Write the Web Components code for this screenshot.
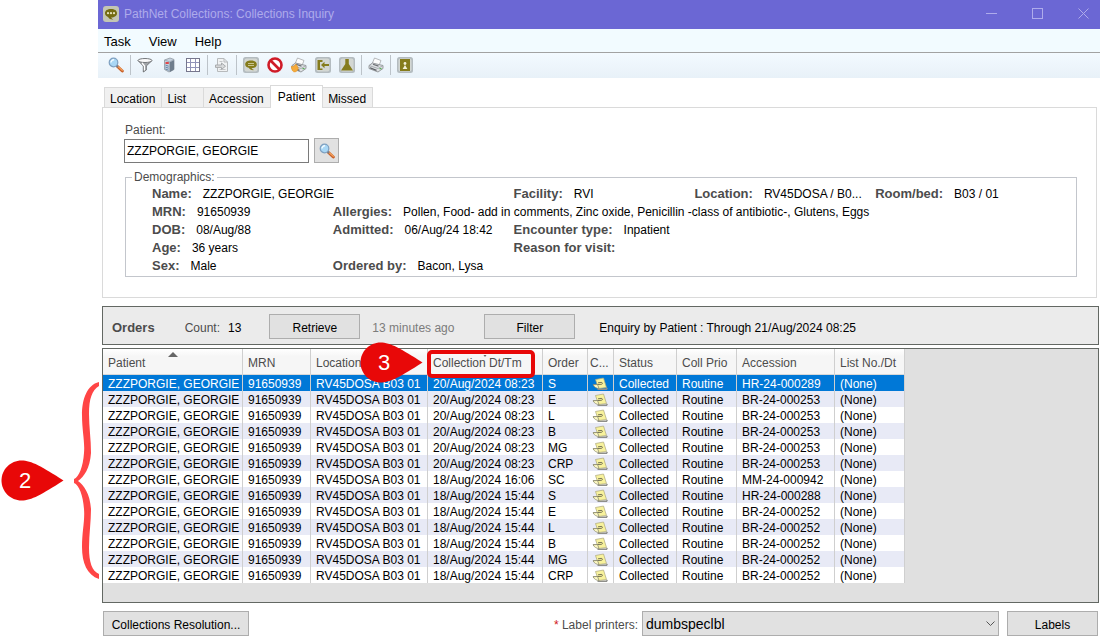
<!DOCTYPE html>
<html lang="en">
<head>
<meta charset="utf-8">
<title>PathNet Collections: Collections Inquiry</title>
<style>
  html, body { margin: 0; background: #fff; }
  body { font: 12px/16px "Liberation Sans", Arial, sans-serif; color: #000; }
</style>
</head>
<body>
<app-window>
  <title-bar slot="bar">PathNet Collections: Collections Inquiry</title-bar>
  <menu-bar slot="bar"></menu-bar>
  <tool-bar slot="bar"></tool-bar>
  <tab-strip></tab-strip>
  <patient-panel>
    <data-field label="Name">ZZZPORGIE, GEORGIE</data-field>
    <data-field label="Facility" col="3">RVI</data-field>
    <data-field label="Location" col="4">RV45DOSA / B0...</data-field>
    <data-field label="Room/bed" col="5">B03 / 01</data-field>
    <data-field label="MRN">91650939</data-field>
    <data-field label="Allergies" col="2" span="4">Pollen, Food- add in comments, Zinc oxide, Penicillin -class of antibiotic-, Glutens, Eggs</data-field>
    <data-field label="DOB">08/Aug/88</data-field>
    <data-field label="Admitted" col="2">06/Aug/24 18:42</data-field>
    <data-field label="Encounter type" col="3">Inpatient</data-field>
    <data-field label="Age">36 years</data-field>
    <data-field label="Reason for visit" col="3"></data-field>
    <data-field label="Sex">Male</data-field>
    <data-field label="Ordered by" col="2">Bacon, Lysa</data-field>
  </patient-panel>
  <orders-bar></orders-bar>
  <orders-grid>
    <step-brace slot="notes"></step-brace>
    <step-pin slot="notes" style="left:-102px; top:111px">2</step-pin>
    <step-box slot="notes"></step-box>
    <step-pin slot="notes" style="left:257px; top:-7px">3</step-pin>
  </orders-grid>
  <footer-bar></footer-bar>
</app-window>

<script>
const define = (name, html, setup) => customElements.define(name, class extends HTMLElement {
  constructor() {
    super();
    this.attachShadow({ mode: 'open' }).innerHTML = html;
  }
  connectedCallback() { if (setup) setup(this, this.shadowRoot); }
});

const svg = (body, w = 16, h = 16) => `<svg width="${w}" height="${h}" viewBox="0 0 ${w} ${h}" aria-hidden="true">${body}</svg>`;
const tile = body => svg(`<rect x="0" y="0" width="16" height="16" rx="2.500" fill="#b4bcc0"/><rect x="1.500" y="1.500" width="13" height="13" rx="2" fill="#d3d7d3"/>${body}`);
const printer = `<path d="M4 7 6.500 1l6.500 2.500-2 5z" fill="#fdfdfd" stroke="#a5a7aa" stroke-width=".8"/><path d="M1 8.500 4.500 6l10.500 2.500v3l-5 3.500-9-3.500z" fill="#dde0e3" stroke="#85888c" stroke-width=".8"/><path d="M1 8.500l9 3 5-3" fill="none" stroke="#9b9fa4" stroke-width=".8"/><path d="M2 10.800l6.500 2.600" stroke="#5b5f63" stroke-width="1.200"/><path d="M5 7.200l5.500 1.900" stroke="#6b6e72" stroke-width="1.200"/><rect x="11.500" y="11" width="2" height="1.200" fill="#55b255"/>`;
const icons = {
  search: svg(`<path d="M9.500 9.500 14.300 14" stroke="#c9622b" stroke-width="3" stroke-linecap="round"/><path d="M9.800 9.300 14.300 13.300" stroke="#f3a05c" stroke-width="1.200" stroke-linecap="round"/><path d="M8.500 8.500l1.500 1.500" stroke="#777f8a" stroke-width="2"/><circle cx="5.500" cy="5.500" r="4.300" fill="#a9d7f5" stroke="#7fa0c0" stroke-width="1.200"/><path d="M3 5.500A2.800 2.800 0 0 1 6 2.800" fill="none" stroke="#f2fbff" stroke-width="1.500"/>`),
  filter: svg(`<path d="M1 3.500 6.300 9v6l3-2V9L15 3.500z" fill="#a2a5a8" stroke="#5f6265" stroke-width=".8"/><ellipse cx="8" cy="3.500" rx="7" ry="2" fill="#fafafa" stroke="#76797c"/><path d="M5 6 7.500 9v4.500" fill="none" stroke="#fff" stroke-width="1.300"/>`),
  server: svg(`<path d="M3.500 3 9 1l4 1.500v10l-5 2.500-4.500-2.500z" fill="#c6d2df" stroke="#8f989f" stroke-width=".8"/><path d="M9 5l4-2v9.500L9 15z" fill="#6f7d8c"/><path d="M3.500 3 8.500 4.800 13 2.700M8.500 5v10" fill="none" stroke="#9aa5b0" stroke-width=".8"/><path d="M4.300 8l3.400 1.200M4.300 10l3.400 1.200M4.300 12l3.400 1.200" stroke="#6987a8"/><rect x="4.500" y="5" width="3.300" height="2" fill="#e0474a"/>`),
  grid: svg(`<rect x="1.500" y="1.500" width="13" height="13" fill="#fff" stroke="#76768c"/><path d="M2 5.500h12M2 10.500h12M5.500 2v12M10.500 2v12" stroke="#9193b8"/>`),
  page: svg(`<path d="M3.500 1.500h6.500l3.500 3.500v9.500h-10z" fill="#f0f2f3" stroke="#b7babc"/><path d="M10 1.500V5h3.500" fill="none" stroke="#b7babc"/><path d="M5.500 4.500h3M5.500 12.500h6" stroke="#c4c6c8"/><path d="M1.500 8h6V6l4 3.200-4 3.200v-2h-6z" fill="#d9dbdc" stroke="#a8abad"/>`),
  chat: tile(`<path d="M8 3.500c3.400 0 5.800 1.500 5.800 3.900 0 2.300-2.100 3.800-5.300 3.900.7.900 1.500 1.400 2.500 1.800-2.600.2-4.200-.6-5.300-2.300C3.300 10.200 2.200 9 2.200 7.400 2.200 5 4.600 3.500 8 3.500z" fill="#857c1c"/><path d="M5 6.500h6M5 8.500h6" stroke="#d9d6ae" stroke-width=".8"/>`),
  stop: svg(`<circle cx="8" cy="8" r="6.500" fill="#fff" stroke="#cf1c28" stroke-width="2.600"/><path d="M3.500 3.500l9 9" stroke="#cf1c28" stroke-width="2.600"/>`),
  hotprint: svg(printer + `<path d="M0 9.500c2 .5 3.500-.5 5-2.500.3 1.700 2.500 2.700 2.200 4.800-.6 2.400-2.700 3.400-4.500 3C.5 13.500 1 11.500 0 9.500z" fill="#f5ab3c" stroke="#e0911f" stroke-width=".6"/>`),
  exit: tile(`<path d="M2.500 3h5v2H5v6.500h2.500V13h-5z" fill="#857c1c"/><path d="M6 8 9.500 4.800v2.200H14v2H9.500v2.200z" fill="#857c1c"/>`),
  flask: tile(`<path d="M6.300 2h3.500v5l4.200 6.500H2L6.300 7z" fill="#857c1c"/>`),
  print: svg(printer),
  badge: tile(`<rect x="3" y="2" width="10" height="12" fill="#857c1c"/><circle cx="8" cy="6.500" r="1.400" fill="#f2f0d8"/><path d="M8 8l2.400 4H5.600z" fill="#f2f0d8"/>`),
  app: svg(`<rect x="0" y="0" width="16" height="16" rx="3" fill="#c3c6b4"/><path d="M8 3c3.600 0 6 1.600 6 4.200s-2.400 4.200-6 4.200c.6 1 1.400 1.600 2.400 2-2.600.2-4.400-.7-5.400-2.500C3.300 10.200 2 9 2 7.200 2 4.600 4.400 3 8 3z" fill="#746c12"/><circle cx="5" cy="7.200" r="1.100" fill="#e8e5c0"/><circle cx="8" cy="7.200" r="1.100" fill="#e8e5c0"/><circle cx="11" cy="7.200" r="1.100" fill="#e8e5c0"/>`),
  note: svg(`<path d="M5.500 12.300h9l.8-1.500" fill="none" stroke="#8f8f8a" stroke-width="1.400"/><path d="M3.500 2.500 11.500 1 14.500 10.500 6.500 11.500z" fill="#f8f29c" stroke="#aaa67c" stroke-width=".7"/><path d="M1 7.800 9.500 7.300c1.300-.2 1.200-2-.3-1.900L6 5.800" fill="none" stroke="#6a6850" stroke-width=".9"/><path d="M1 7.800l4.500-.3 1.500 4c-2.300 0-4.600-1.200-6-3.700z" fill="#fdf9c4" stroke="#88866a" stroke-width=".7"/>`, 16, 14),
};

define('app-window', `
<style>
  :host { display: flex; flex-direction: column; min-height: 100vh; margin-left: 98px; box-sizing: border-box; background: #fff; }
  main { flex: 1; display: flex; flex-direction: column; padding: 8px 1px 4px 4px; }
</style>
<slot name="bar"></slot>
<main><slot></slot></main>`);

define('title-bar', `
<style>
  :host { display: flex; align-items: center; gap: 5px; height: 29px; padding: 0 5px 2px; background: #6b67d4; color: #aeabeb; box-sizing: border-box; }
  h1 { flex: 1; margin: 0; font: 12px/16px "Liberation Sans", sans-serif; }
  button { width: 24px; height: 24px; padding: 0; border: 0; background: none; color: inherit; display: grid; place-items: center; }
  nav { display: flex; gap: 22px; }
  svg { display: block; }
</style>
${icons.app}
<h1><slot></slot></h1>
<nav>
  <button aria-label="Minimise">${svg('<path d="M0 5.500h11" stroke="currentColor"/>', 11, 11)}</button>
  <button aria-label="Maximise">${svg('<rect x=".5" y=".5" width="10" height="10" fill="none" stroke="currentColor"/>', 11, 11)}</button>
  <button aria-label="Close">${svg('<path d="M.5.500l10 10M10.500.500l-10 10" stroke="currentColor"/>', 11, 11)}</button>
</nav>`);

define('menu-bar', `
<style>
  :host { display: flex; align-items: center; gap: 18px; height: 24px; padding: 3px 6px 0; border-bottom: 1px solid #a2a2a2; background: #f2fbff; box-sizing: border-box; }
  button { border: 0; padding: 0; background: none; font: inherit; font-size: 13px; color: #000; }
</style>
<button>Task</button><button>View</button><button>Help</button>`);

define('tool-bar', `
<style>
  :host { display: flex; align-items: center; height: 25px; padding: 0 6px 1px; background: linear-gradient(#f3faff, #e8f1f8); box-sizing: border-box; }
  button { width: 24px; height: 24px; border: 0; padding: 0; background: none; display: grid; place-items: center; }
  i { width: 1px; height: 20px; margin: 0 2px; background: #bcc3c9; }
  svg { display: block; }
</style>
${[['search'], ['filter', 'server', 'grid'], ['page'], ['chat', 'stop', 'hotprint', 'exit', 'flask'], ['print'], ['badge']]
  .map(group => group.map(n => `<button aria-label="${n}">${icons[n]}</button>`).join('')).join('<i></i>')}`);

define('tab-strip', `
<style>
  :host { display: flex; align-items: flex-end; padding-left: 2px; height: 22px; position: relative; z-index: 1; margin-bottom: -1px; }
  button { height: 20px; margin: 0 0 1px -1px; padding: 2px 6px 0 5px; border: 1px solid #dadada; border-bottom: 0; background: #f0f0f0; font: inherit; color: #000; text-align: left; box-sizing: border-box; }
  button:first-child { margin-left: 0; }
  .wide { padding-right: 17px; }
  button[aria-selected=true] { height: 23px; margin-bottom: 0; padding: 0 7px; background: #fff; }
  div { display: flex; align-items: flex-end; }
</style>
<div role="tablist">
  <button role="tab">Location</button><button role="tab" class="wide">List</button><button role="tab">Accession</button><button role="tab" aria-selected="true">Patient</button><button role="tab">Missed</button>
</div>`);

define('patient-panel', `
<style>
  :host { display: block; margin-right: 2px; padding: 14px 19px 20px 21px; border: 1px solid #dadada; box-sizing: border-box; }
  label { display: block; color: #4c4c4c; padding-left: 1px; }
  .row { display: flex; align-items: flex-end; gap: 5px; margin-bottom: 6px; }
  input { width: 185px; height: 24px; box-sizing: border-box; border: 1px solid #7a7a7a; padding: 0 2px; font: inherit; color: #000; background: #fff; }
  button { width: 25px; height: 25px; padding: 0; display: grid; place-items: center; border: 1px solid #adadad; background: #e1e1e1; }
  fieldset { margin: 0 0 0 1px; min-width: 0; border: 1px solid #c3c6cc; padding: 0 20px 1px 26px; }
  legend { margin-left: -20px; padding: 0 2px; color: #4c4c4c; }
  .fields { display: grid; grid-template-columns: repeat(5, minmax(0, 1fr)); grid-auto-rows: 18px; }
</style>
<label for="patient">Patient:</label>
<div class="row">
  <input id="patient" value="ZZZPORGIE, GEORGIE">
  <button aria-label="Find patient">${icons.search}</button>
</div>
<fieldset>
  <legend>Demographics:</legend>
  <div class="fields"><slot></slot></div>
</fieldset>`);

define('data-field', `
<style>
  :host { display: flex; align-items: center; gap: 11px; white-space: nowrap; line-height: 18px; }
  b { font-size: 13px; color: #4c4c4c; }
</style>
<b></b><span><slot></slot></span>`, (el, root) => {
  root.querySelector('b').textContent = el.getAttribute('label') + ':';
  el.style.gridColumn = `${el.getAttribute('col') || 1} / span ${el.getAttribute('span') || 1}`;
});

define('push-button', `
<style>
  :host { display: block; }
  button { display: block; width: 100%; height: 25px; padding: 2px 4px 0; border: 1px solid #adadad; background: #e1e1e1; font: inherit; color: #000; }
</style>
<button><slot></slot></button>`);

define('orders-bar', `
<style>
  :host { display: flex; align-items: center; height: 39px; margin-top: 8px; padding: 2px 9px 0; border: 1px solid #636863; background: #ebebeb; box-sizing: border-box; white-space: nowrap; }
  h2 { margin: 0 30px 0 0; font-size: 13px; line-height: 16px; color: #4c4c4c; padding-top: 3px; }
  .count { display: flex; gap: 8px; color: #4c4c4c; padding-top: 3px; }
  output { color: #000; }
  push-button { width: 91px; }
  .first { margin-left: 28px; }
  .ago { width: 112px; padding: 3px 0 0 12px; color: #7c7c7c; }
  .query { padding: 3px 0 0 24px; }
</style>
<h2>Orders</h2>
<span class="count"><span>Count:</span><output>13</output></span>
<push-button class="first">Retrieve</push-button>
<span class="ago">13 minutes ago</span>
<push-button>Filter</push-button>
<span class="query">Enquiry by Patient : Through 21/Aug/2024 08:25</span>`);

const orders = [
  ['20/Aug/2024 08:23', 'S', 'HR-24-000289'],
  ['20/Aug/2024 08:23', 'E', 'BR-24-000253'],
  ['20/Aug/2024 08:23', 'L', 'BR-24-000253'],
  ['20/Aug/2024 08:23', 'B', 'BR-24-000253'],
  ['20/Aug/2024 08:23', 'MG', 'BR-24-000253'],
  ['20/Aug/2024 08:23', 'CRP', 'BR-24-000253'],
  ['18/Aug/2024 16:06', 'SC', 'MM-24-000942'],
  ['18/Aug/2024 15:44', 'S', 'HR-24-000288'],
  ['18/Aug/2024 15:44', 'E', 'BR-24-000252'],
  ['18/Aug/2024 15:44', 'L', 'BR-24-000252'],
  ['18/Aug/2024 15:44', 'B', 'BR-24-000252'],
  ['18/Aug/2024 15:44', 'MG', 'BR-24-000252'],
  ['18/Aug/2024 15:44', 'CRP', 'BR-24-000252'],
];
const columns = [['Patient', 140], ['MRN', 68], ['Location', 117], ['Collection Dt/Tm', 115], ['Order', 45], ['C...', 26], ['Status', 63], ['Coll Prio', 60], ['Accession', 98], ['List No./Dt', 70]];

define('orders-grid', `
<style>
  :host { display: block; flex: 1; position: relative; margin-top: 3px; border: 1px solid #636863; background: #e0e0e0; box-sizing: border-box; }
  table { width: 802px; table-layout: fixed; border-collapse: separate; border-spacing: 0; }
  th, td { padding: 0 0 0 5px; text-align: left; white-space: nowrap; font-weight: normal; border-right: 1px solid #cfcfcf; box-sizing: border-box; line-height: 16px; }
  th { position: relative; height: 26px; padding-top: 3px; color: #4c4c4c; background: linear-gradient(#fff, #f6f6f6 30%); border-bottom: 1px solid #d8d8d8; }
  th:nth-child(6) { padding-left: 2px; }
  th svg { position: absolute; top: 3px; left: 50%; margin-left: -5px; }
  td { height: 16px; padding-top: 2px; line-height: 14px; }
  td:nth-child(6) { padding-top: 1px; }
  td svg { display: block; margin-left: -1px; }
  tbody tr { background: #fff; }
  tbody tr:nth-child(even) { background: #e8eaf6; }
  tbody tr.on { background: #0078d7; color: #fff; }
</style>
<table>
  <colgroup>${columns.map(c => `<col style="width:${c[1]}px">`).join('')}</colgroup>
  <thead><tr>${columns.map(c => `<th scope="col">${c[0]}${c[0] === 'Patient' ? svg('<path d="M0 5 5 0l5 5z" fill="#666"/>', 10, 5) : c[0] === 'Collection Dt/Tm' ? svg('<path d="M3.500 3h3L5 5z" fill="#666"/>', 10, 5) : ''}</th>`).join('')}</tr></thead>
  <tbody>${orders.map((o, i) => `<tr${i ? '' : ' class="on"'}><td>ZZZPORGIE, GEORGIE</td><td>91650939</td><td>RV45DOSA B03 01</td><td>${o[0]}</td><td>${o[1]}</td><td>${icons.note}</td><td>Collected</td><td>Routine</td><td>${o[2]}</td><td>(None)</td></tr>`).join('')}</tbody>
</table>
<slot name="notes"></slot>`);

define('step-pin', `
<style>
  :host { position: absolute; display: grid; width: 63px; height: 41px; color: #fff; font-size: 22px; line-height: 41px; }
  svg, span { grid-area: 1 / 1; }
  span { width: 48px; text-align: center; }
</style>
${svg('<path d="M20.500.500C9.500.500.500 9.500.500 20.500s9 20 20 20c10 0 20-6 42-20C40.500 6.500 30.500.500 20.500.500z" fill="#e80808"/>', 63, 41)}
<span><slot></slot></span>`);

define('step-box', `
<style>
  :host { position: absolute; left: 324px; top: 1px; width: 108px; height: 28px; box-sizing: border-box; border: 4px solid #e80808; border-radius: 5px; }
</style>`);

define('step-brace', `
<style>
  :host { position: absolute; left: -29px; top: 31px; display: block; }
  svg { display: block; }
</style>
${svg('<path d="M25 2C13 5 8 19 8 35c0 16 3 26 2 38C9 87 5 97 0 99v4c5 2 9 12 10 26 1 12-2 22-2 38 0 16 5 28 17 32v-5c-7-3-10-12-10-26 0-14 2-26 2-39-1-15-7-24-13-28 6-4 12-13 13-28 0-14-2-26-2-39 0-15 3-24 10-28z" fill="#ff4545"/>', 25, 200)}`);

define('footer-bar', `
<style>
  :host { display: flex; align-items: center; margin-top: 8px; padding: 0 1px; white-space: nowrap; }
  .resolve { width: 146px; margin-right: auto; }
  label { color: #4c4c4c; padding: 3px 4px 0 0; }
  em { color: #d01818; font-style: normal; }
  .pick { position: relative; flex: 0 1 357px; margin-right: 8px; }
  select { display: block; width: 100%; height: 25px; padding: 0 3px; border: 1px solid #adadad; border-radius: 0; background: #e1e1e1; appearance: none; font: 14px/20px "Liberation Sans", sans-serif; color: #000; }
  .pick svg { position: absolute; right: 4px; top: 10px; pointer-events: none; }
  .labels { width: 91px; }
</style>
<push-button class="resolve">Collections Resolution...</push-button>
<label for="printer"><em>*</em> Label printers:</label>
<div class="pick"><select id="printer"><option>dumbspeclbl</option></select>${svg('<path d="M.5.500l4 4 4-4" fill="none" stroke="#555"/>', 9, 6)}</div>
<push-button class="labels">Labels</push-button>`);
</script>
</body>
</html>
